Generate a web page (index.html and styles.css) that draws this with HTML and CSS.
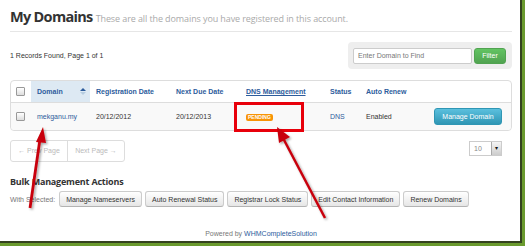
FILE: index.html
```html
<!DOCTYPE html>
<html lang="en">
<head>
<meta charset="UTF-8">
<meta name="viewport" content="width=device-width, initial-scale=1.0">
<title>My Domains</title>
<link rel="stylesheet" href="styles.css">
</head>
<body>
<div class="screen">
    <div class="page">
        <div class="page-header">
            <h1>My Domains <small>These are all the domains you have registered in this account.</small></h1>
        </div>

        <div class="toolbar">
            <p class="records">1 Records Found, Page 1 of 1</p>
            <form class="search" onsubmit="return false">
                <input type="text" placeholder="Enter Domain to Find">
                <button type="submit" class="btn btn-success">Filter</button>
            </form>
        </div>

        <table class="domains">
            <colgroup>
                <col class="col-check">
                <col class="col-domain">
                <col class="col-reg">
                <col class="col-due">
                <col class="col-dns">
                <col class="col-status">
                <col class="col-renew">
                <col>
            </colgroup>
            <tr>
                <th><span class="checkbox"></span></th>
                <th class="sorted">Domain <span class="sort"><i class="up"></i><i class="down"></i></span></th>
                <th>Registration Date</th>
                <th>Next Due Date</th>
                <th><a href="#">DNS Management</a></th>
                <th>Status</th>
                <th>Auto Renew</th>
                <th></th>
            </tr>
            <tr>
                <td><span class="checkbox"></span></td>
                <td><a href="#">mekganu.my</a></td>
                <td>20/12/2012</td>
                <td>20/12/2013</td>
                <td><span class="label label-warning">PENDING</span></td>
                <td><a href="#">DNS</a></td>
                <td>Enabled</td>
                <td><button class="btn btn-info">Manage Domain</button></td>
            </tr>
        </table>

        <div class="pager-row">
            <ul class="pager">
                <li>&larr; Prev Page</li>
                <li>Next Page &rarr;</li>
            </ul>
            <div class="per-page"><span>10</span><span class="caret-box">&#9662;</span></div>
        </div>

        <h3 class="bulk-title">Bulk Management Actions</h3>
        <div class="bulk-actions">
            <span>With Selected:</span>
            <button class="btn">Manage Nameservers</button>
            <button class="btn">Auto Renewal Status</button>
            <button class="btn">Registrar Lock Status</button>
            <button class="btn">Edit Contact Information</button>
            <button class="btn">Renew Domains</button>
        </div>

        <p class="footer">Powered by <a href="#">WHMCompleteSolution</a></p>
    </div>

    <!-- annotations drawn over the screenshot -->
    <svg class="annotations" width="520" height="241" viewBox="0 0 520 241">
        <defs>
            <filter id="shade" x="-20%" y="-20%" width="140%" height="140%">
                <feDropShadow dx="1.5" dy="1.5" stdDeviation="1" flood-color="#000" flood-opacity="0.35"/>
            </filter>
        </defs>
        <rect x="235.5" y="103.5" width="67" height="27" fill="none" stroke="#e8000b" stroke-width="3"/>
        <g filter="url(#shade)" fill="#c8000a" stroke="#c8000a">
            <line x1="30" y1="208" x2="40" y2="139" stroke-width="2.8"/>
            <polygon points="43,127 36,142 46,143" stroke="none"/>
            <line x1="325" y1="218" x2="283" y2="138" stroke-width="2.5"/>
            <polygon points="277,127 279,143 290,137" stroke="none"/>
        </g>
    </svg>
</div>
</body>
</html>
```

FILE: styles.css
```css
body {
    margin: 0;
    padding: 0;
    background-color: #6a9a2e;
    font-family: "Liberation Sans", Arial, sans-serif;
    font-size: 7px;
    color: #333;
}
a {
    color: #2d5c9c;
    text-decoration: none;
}
.screen {
    position: relative;
    width: 520px;
    height: 241px;
    background-color: #fff;
    border-right: 2px solid #34421f;
    border-bottom: 2px solid #34421f;
    overflow: hidden;
}
.page {
    padding: 0 8px 0 10px;
}
.page-header {
    height: 22px;
    padding-top: 9px;
    border-bottom: 1px solid #e6e6e6;
}
h1 {
    margin: 0;
    font-family: "Open Sans", sans-serif;
    font-size: 14.5px;
    line-height: 15px;
    font-weight: bold;
    letter-spacing: -0.7px;
    color: #333;
}
h1 small {
    font-size: 9px;
    font-weight: normal;
    letter-spacing: -0.1px;
    color: #aaa;
}
.toolbar {
    display: flex;
    align-items: center;
    justify-content: space-between;
    margin-top: 10px;
    height: 27px;
}
.records {
    margin: 0;
}
.search {
    display: flex;
    align-items: center;
    gap: 2px;
    height: 27px;
    padding: 0 5px;
    box-sizing: border-box;
    width: 164px;
    background-color: #eee;
    border-radius: 4px;
}
.search input {
    width: 119px;
    height: 16px;
    box-sizing: border-box;
    padding: 0 4px;
    border: 1px solid #ccc;
    border-radius: 2px;
    font-family: inherit;
    font-size: 7px;
    color: #555;
}
.search input::placeholder {
    color: #777;
}
.btn {
    height: 16px;
    padding: 0 6px;
    font-family: inherit;
    font-size: 7px;
    color: #333;
    background: linear-gradient(#fff, #e6e6e6);
    border: 1px solid #ccc;
    border-bottom-color: #b3b3b3;
    border-radius: 3px;
    cursor: pointer;
}
.btn-success {
    width: 32px;
    padding: 0;
    color: #fff;
    background: linear-gradient(#62c462, #51a351);
    border-color: #51a351;
}
.btn-info {
    width: 68px;
    height: 17px;
    padding: 0;
    color: #fff;
    background: linear-gradient(#5bc0de, #2f96b4);
    border-color: #2f96b4;
}

/* Domains table */
.domains {
    width: 502px;
    margin-top: 11px;
    table-layout: fixed;
    border-collapse: separate;
    border-spacing: 0;
    border: 1px solid #ddd;
    border-radius: 4px;
}
.col-check { width: 20px; }
.col-domain { width: 59px; }
.col-reg { width: 80px; }
.col-due { width: 70px; }
.col-dns { width: 84px; }
.col-status { width: 36px; }
.col-renew { width: 68px; }
.domains th,
.domains td {
    padding: 0 0 0 6px;
    text-align: left;
    white-space: nowrap;
}
.domains th:first-child,
.domains td:first-child {
    padding-left: 5px;
}
.domains th {
    height: 21px;
    font-weight: bold;
    color: #2d5c9c;
    border-bottom: 1px solid #ddd;
}
.domains th a {
    text-decoration: underline;
    color: #2d5c9c;
}
.domains th.sorted {
    position: relative;
    background-color: #dde9f3;
}
.domains td {
    height: 27px;
    background-color: #f9f9f9;
}
.domains tr:last-child td:first-child {
    border-bottom-left-radius: 4px;
}
.domains tr:last-child td:last-child {
    border-bottom-right-radius: 4px;
}
.sort {
    position: absolute;
    right: 4px;
    top: 7px;
    display: flex;
    flex-direction: column;
    gap: 1px;
}
.sort i {
    display: block;
    width: 0;
    height: 0;
    border-left: 3px solid transparent;
    border-right: 3px solid transparent;
}
.sort .up {
    border-bottom: 3px solid #2d5c9c;
}
.sort .down {
    border-top: 3px solid #b7cde0;
}
.checkbox {
    display: inline-block;
    width: 7px;
    height: 7px;
    vertical-align: middle;
    border: 1px solid #999;
    border-radius: 1px;
    background: linear-gradient(#fff, #ddd);
}
.label {
    display: inline-block;
    padding: 1px 2px;
    font-size: 5px;
    font-weight: bold;
    line-height: 5px;
    color: #fff;
    border-radius: 2px;
}
.label-warning {
    background-color: #f89406;
}

/* Pagination */
.pager-row {
    display: flex;
    justify-content: space-between;
    align-items: flex-start;
    margin-top: 9px;
}
.pager {
    display: flex;
    margin: 0;
    padding: 0;
    list-style: none;
    border: 1px solid #ddd;
    border-radius: 3px;
}
.pager li {
    width: 56px;
    height: 20px;
    line-height: 20px;
    text-align: center;
    color: #bbb;
}
.pager li + li {
    border-left: 1px solid #ddd;
}
.per-page {
    display: flex;
    align-items: center;
    justify-content: space-between;
    width: 33px;
    height: 15px;
    margin: 1px 10px 0 0;
    padding-left: 4px;
    box-sizing: border-box;
    border: 1px solid #ccc;
    color: #888;
}
.caret-box {
    width: 9px;
    height: 13px;
    line-height: 13px;
    text-align: center;
    font-size: 6px;
    color: #111;
    background: linear-gradient(#f5f5f5, #ccc);
    border-left: 1px solid #aaa;
}

/* Bulk actions */
.bulk-title {
    margin: 14px 0 0;
    font-family: "Open Sans", sans-serif;
    font-size: 9px;
    line-height: 12px;
    font-weight: bold;
    letter-spacing: -0.2px;
    color: #333;
}
.bulk-actions {
    display: flex;
    align-items: center;
    gap: 3px;
    margin-top: 3px;
    color: #777;
}
.bulk-actions span {
    margin-right: 1px;
}
.footer {
    margin: 23px 0 0;
    text-align: center;
    color: #777;
}
.annotations {
    position: absolute;
    left: 0;
    top: 0;
}
```
